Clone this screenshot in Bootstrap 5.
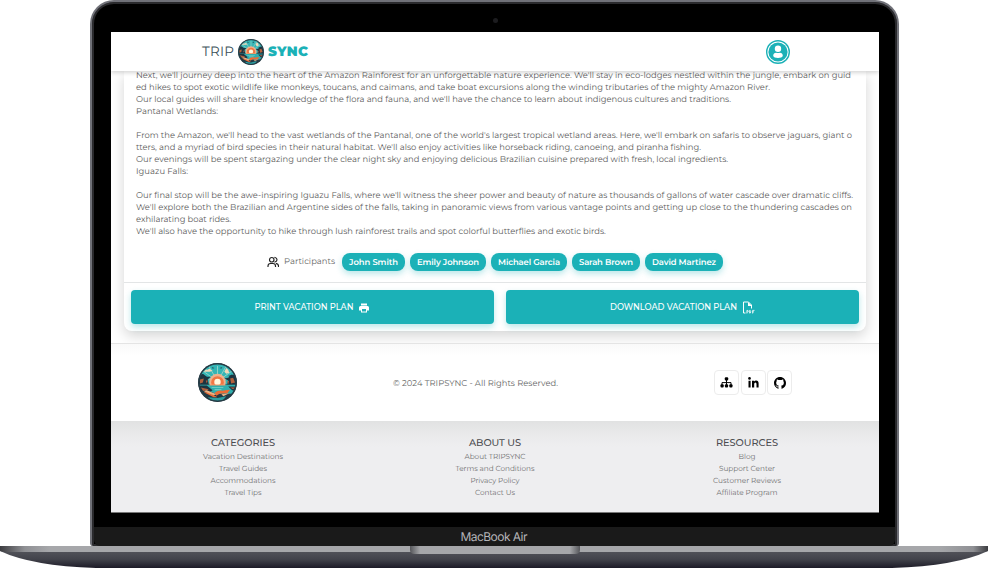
<!DOCTYPE html>
<html lang="en">
<head>
<meta charset="utf-8">
<meta name="viewport" content="width=device-width, initial-scale=1">
<title>TRIPSYNC</title>
<link href="https://cdn.jsdelivr.net/npm/bootstrap@5.3.0/dist/css/bootstrap.min.css" rel="stylesheet">
<style>
body{font-family:Montserrat,Inter,sans-serif;background:#fff;color:#666;width:988px;height:568px;overflow:hidden;text-rendering:geometricPrecision}
svg{display:block;flex:none}
.lid{width:809px;height:546px;margin-left:89.5px;border:2px solid #707178;border-bottom:0;border-radius:24px 24px 3px 3px;background:#000;box-shadow:inset 0 0 0 2px #2a2a2d;padding:0 17.5px 0 19.5px}
.cam-row{height:30px}
.cam{width:5px;height:5px;border-radius:50%;background:#1c1c1f;margin-top:8px}
.screen{width:768px;height:481px;background:#fff;border-bottom:1px solid #777}
.chin{height:19px;margin:14px -15.5px 0 -17.5px;background:#1a1a1a;border-radius:0 0 6px 6px;color:#b4b4b8;font-size:12px;line-height:19px;font-family:Inter,sans-serif}
.fit{display:inline-block;white-space:pre}
.topbar{height:39px;padding:0 89px 0 91px;background:#fff;box-shadow:0 2px 4px rgba(0,0,0,.16);z-index:2}
.word-a{font-size:13.5px;color:#3b5059;line-height:20px;padding-top:1px}
.word-b{font-size:13.5px;color:#1bb1b7;font-weight:900;line-height:20px;padding-top:1px}
.trip{height:260px;margin:0 13px;background:#fff;border-radius:0 0 8px 8px;box-shadow:0 5px 14px rgba(0,0,0,.17)}
.story{padding:0 12px;margin-top:-.6px;font-size:8.4px;line-height:12px;height:183px;color:#5c5c5c}
.story .fit{display:block;width:max-content}
.people{height:28.600px;font-size:8.4px}
.who{padding-top:1px;margin:0 4px 0 5px}
.chips{gap:5px;margin-left:3px}
.chip{background:#1bb1b7;color:#fff;height:17.5px;line-height:20px;padding:0 7px;border-radius:8px;font-weight:600;box-shadow:0 3px 6px rgba(27,177,183,.3);white-space:nowrap}
.actions{height:49px;padding:7px 7px 8px;border-top:1px solid #e3e5e6;gap:12px;border-radius:0 0 8px 8px}
.act{height:34px;border-radius:4px;background:#1bb1b7;color:#fff;font-size:8.4px;font-weight:500;box-shadow:0 3px 6px rgba(27,177,183,.3);border:0;padding:1px 0 0;gap:5px}
.w-print{width:363px}.w-load{width:353px}
.foot{height:78px;margin-top:12px;border-top:1px solid #e4e4e4;background:linear-gradient(#f9f9f9,#fff 12px);padding:0 87px;font-size:8.4px;z-index:1}
.rights{padding-top:3px}
.socials{gap:1.5px}
.sq{width:25px;height:25px;border:1px solid #ececec;border-radius:4px;background:#fff;color:#000}
.sitemap{background:linear-gradient(#e1e2e2,#eaeaeb 14px,#eeeef0 26px);padding:16px 6px 0;font-size:7.3px;line-height:12px;color:#707070}
.sitemap h2{font-size:9.8px;line-height:13px;margin:0 0 .5px;color:#4b4c50;font-weight:500}
.sitemap a{color:inherit;text-decoration:none;height:12px}
</style>
<script src="https://cdn.jsdelivr.net/npm/bootstrap@5.3.0/dist/js/bootstrap.bundle.min.js"></script>
</head>
<body>
<svg width="0" height="0" class="position-absolute">
<defs>
<clipPath id="disc"><circle cx="20" cy="20" r="19"/></clipPath>
<symbol id="emblem" viewBox="0 0 40 40">
<circle cx="20" cy="20" r="20" fill="#263b45"/>
<g clip-path="url(#disc)">
<path fill="#35b5b5" d="M0 0h40v22H0z"/>
<path stroke="#a9d8cb" stroke-width=".8" d="M20 19 5 8M20 19 11 3M20 19V3M20 19 29 3M20 19 35 8M20 19 3 14M20 19 37 14"/>
<path fill="#f3d8b9" d="M6 9q2-3 4-2 2-2 3 0l2 1-3 1H7zM27 9l2-4 2 2 1 3-3 1z"/><path fill="#23525c" d="M14 4l3 1-2 1zM22 5l3-1-1 2zM31 13l4-1-2 3zM5 13l4 1-3 1z"/>
<circle cx="20" cy="19.500" r="8.500" fill="#eeb18d"/><circle cx="20" cy="20" r="6.500" fill="#f17743"/><circle cx="20" cy="19.500" r="3.300" fill="#fff8df"/>
<path fill="#2fafae" d="M0 22.500h40v9H0z"/><path fill="#f39a68" d="M12 22h16v1H12z"/><path fill="#7ed3cb" d="M14 24.500h12v1H14zM17 27h7v1h-7z"/>
<path fill="#1d3440" d="M0 13l5-2 4 3 4 0-3 3 1 5H0zM40 12l-6 0-3 3-4 1 4 2-1 4h10zM0 23h9l6 5-5 3-10-1zM40 24h-9l4 4 5 1z"/>
<path fill="#b4613d" d="M2 17l4-1-1 4-3 1zM8 18l2 0-1 3zM33 16l3-1 2 5-4 1zM30 19l2-1-1 4zM3 25l8 2-5 3zM33 25l5 0-2 2z"/>
<path fill="#1f3944" d="M0 30q10-4 20 3t20-2v9H0z"/>
<path fill="#ec6b35" d="M17 30.500q4-3 8-2 5-1 8-1l-3 3.500-8 .5-3 2zM6 30l5 0 9 5-4 0z"/><path fill="#e9b184" d="M9 28l10 4-3 1-10-4zM24 32l8-1-6 3z"/>
<path fill="#2c9d9f" d="M10 35l10 1 9-2-4 5H15z"/>
</g>
<circle cx="20" cy="20" r="19.100" fill="none" stroke="#263b45" stroke-width="1.300"/>
</symbol>
</defs>
</svg>

<div class="lid d-flex flex-column">
  <div class="cam-row d-flex justify-content-center pt-2"><span class="cam"></span></div>
  <div class="screen d-flex flex-column overflow-hidden flex-shrink-0">
    <header class="topbar d-flex align-items-center justify-content-between position-relative flex-shrink-0">
      <div class="d-flex align-items-center gap-1">
        <span class="word-a fit" data-w="32">TRIP</span>
        <svg width="26" height="26"><use href="#emblem"/></svg>
        <span class="word-b fit" data-w="40">SYNC</span>
      </div>
      <svg width="24" height="24" viewBox="0 0 24 24"><circle cx="12" cy="12" r="11.300" fill="#fff" stroke="#1bb1b7" stroke-width="1.400"/><circle cx="12" cy="12" r="9.600" fill="#1bb1b7"/><circle cx="12" cy="8.800" r="3.200" fill="#fff"/><path fill="#fff" d="M7.200 15.700c0-1.800 1.200-2.900 3-2.900.7.400 2.900.4 3.600 0 1.800 0 3 1.100 3 2.900-.3 3-9.300 3-9.600 0z"/></svg>
    </header>

    <main class="trip flex-shrink-0">
      <div class="story">
        <span class="fit" data-w="715">Next, we'll journey deep into the heart of the Amazon Rainforest for an unforgettable nature experience. We'll stay in eco-lodges nestled within the jungle, embark on guid</span>
        <span class="fit" data-w="634">ed hikes to spot exotic wildlife like monkeys, toucans, and caimans, and take boat excursions along the winding tributaries of the mighty Amazon River.</span>
        <span class="fit" data-w="595">Our local guides will share their knowledge of the flora and fauna, and we'll have the chance to learn about indigenous cultures and traditions.</span>
        <span class="fit" data-w="82">Pantanal Wetlands:</span>
        <br>
        <span class="fit" data-w="716">From the Amazon, we'll head to the vast wetlands of the Pantanal, one of the world's largest tropical wetland areas. Here, we'll embark on safaris to observe jaguars, giant o</span>
        <span class="fit" data-w="565">tters, and a myriad of bird species in their natural habitat. We'll also enjoy activities like horseback riding, canoeing, and piranha fishing.</span>
        <span class="fit" data-w="592">Our evenings will be spent stargazing under the clear night sky and enjoying delicious Brazilian cuisine prepared with fresh, local ingredients.</span>
        <span class="fit" data-w="52">Iguazu Falls:</span>
        <br>
        <span class="fit" data-w="717">Our final stop will be the awe-inspiring Iguazu Falls, where we'll witness the sheer power and beauty of nature as thousands of gallons of water cascade over dramatic cliffs.</span>
        <span class="fit" data-w="716">We'll explore both the Brazilian and Argentine sides of the falls, taking in panoramic views from various vantage points and getting up close to the thundering cascades on</span>
        <span class="fit" data-w="95">exhilarating boat rides.</span>
        <span class="fit" data-w="470">We'll also have the opportunity to hike through lush rainforest trails and spot colorful butterflies and exotic birds.</span>
      </div>
      <div class="people d-flex justify-content-center align-items-start">
        <div class="d-flex align-items-center">
          <svg width="12" height="12" viewBox="0 0 24 24" fill="none" stroke="#222" stroke-width="2.300" stroke-linecap="square"><circle cx="9.500" cy="7.500" r="4.500"/><path d="M2 21v-1q0-5 5-5h5q5 0 5 5v1M16 3q4 1 4 4.500T16 12M19 15q4 1 4 5v1"/></svg>
          <span class="fit who" data-w="51">Participants</span>
          <div class="chips d-flex">
            <span class="chip"><span class="fit" data-w="49">John Smith</span></span>
            <span class="chip"><span class="fit" data-w="62">Emily Johnson</span></span>
            <span class="chip"><span class="fit" data-w="62">Michael Garcia</span></span>
            <span class="chip"><span class="fit" data-w="54">Sarah Brown</span></span>
            <span class="chip"><span class="fit" data-w="64">David Martinez</span></span>
          </div>
        </div>
      </div>
      <div class="actions d-flex">
        <button class="btn act w-print d-flex align-items-center justify-content-center"><span class="fit" data-w="99">PRINT VACATION PLAN</span>
          <svg width="12" height="12" viewBox="0 0 24 24" fill="#fff"><path d="M6 3h12v4H6zM5 8h14q3 0 3 3v6h-4v4H6v-4H2v-6q0-3 3-3zm3 6v5h8v-5z"/></svg></button>
        <button class="btn act w-load d-flex align-items-center justify-content-center"><span class="fit" data-w="127">DOWNLOAD VACATION PLAN</span>
          <svg width="13" height="13" viewBox="0 0 13 13" fill="none" stroke="#fff"><path d="M3.500 12H1.500V1H6.500L9.500 4V7.500"/><path fill="#fff" stroke="none" d="M6 1l4 4H6z"/><path stroke-width=".800" d="M4.900 12.500V9.400h1q1 .8 0 1.600h-1M7.600 9.400v2.700h.6q1.100-1.300 0-2.700zM10.600 12.500V9.400h1.900M10.600 10.900H12"/></svg></button>
      </div>
    </main>

    <footer class="foot d-flex align-items-center justify-content-between flex-shrink-0 position-relative">
      <svg width="39" height="39"><use href="#emblem"/></svg>
      <span class="fit rights" data-w="165">© 2024 TRIPSYNC - All Rights Reserved.</span>
      <div class="socials d-flex">
        <a class="sq d-flex align-items-center justify-content-center"><svg width="13" height="11" viewBox="0 0 13 11"><path fill="none" stroke="#000" d="M6.500 3v6M2 8V5.600h9V8"/><rect x="4.800" y=".200" width="3.400" height="3.400" rx="1"/><rect x=".500" y="7.200" width="3.200" height="3.200" rx="1"/><rect x="4.900" y="7.200" width="3.200" height="3.200" rx="1"/><rect x="9.300" y="7.200" width="3.200" height="3.200" rx="1"/></svg></a>
        <a class="sq d-flex align-items-center justify-content-center"><svg width="11" height="11" viewBox="0 0 11 11"><circle cx="1.500" cy="1.400" r="1.300"/><path d="M.500 3.700h2.100v6.800H.500zM4 3.700h2v.9q.7-1.100 2.100-1.100 2.500 0 2.500 2.900v4.100H8.500V6.900q0-1.500-1.100-1.500-1.200 0-1.200 1.500v3.600H4z"/></svg></a>
        <a class="sq d-flex align-items-center justify-content-center"><svg width="12" height="12" viewBox="0 0 16 16"><path d="M8 0C3.580 0 0 3.580 0 8c0 3.540 2.290 6.530 5.470 7.590.4.070.55-.17.55-.38 0-.19-.01-.82-.01-1.490-2.010.37-2.530-.49-2.690-.94-.09-.23-.48-.94-.82-1.130-.28-.15-.68-.52-.01-.53.63-.01 1.080.58 1.230.82.720 1.210 1.870.87 2.330.66.070-.52.280-.87.510-1.070-1.780-.2-3.640-.89-3.640-3.950 0-.87.310-1.590.82-2.150-.08-.2-.36-1.020.08-2.120 0 0 .67-.21 2.200.82a7.600 7.600 0 0 1 4 0c1.530-1.040 2.200-.82 2.200-.82.440 1.100.16 1.920.08 2.120.51.560.82 1.270.82 2.150 0 3.070-1.870 3.750-3.650 3.950.29.250.54.730.54 1.480 0 1.070-.01 1.930-.01 2.200 0 .21.150.46.550.38A8 8 0 0 0 16 8c0-4.420-3.580-8-8-8z"/></svg></a>
      </div>
    </footer>

    <nav class="sitemap d-flex text-center flex-grow-1">
      <div class="d-flex flex-column align-items-center flex-fill w-100">
        <h2 class="fit" data-w="64">CATEGORIES</h2>
        <a class="fit" data-w="80">Vacation Destinations</a><a class="fit" data-w="48">Travel Guides</a><a class="fit" data-w="65">Accommodations</a><a class="fit" data-w="37">Travel Tips</a>
      </div>
      <div class="d-flex flex-column align-items-center flex-fill w-100">
        <h2 class="fit" data-w="52">ABOUT US</h2>
        <a class="fit" data-w="61">About TRIPSYNC</a><a class="fit" data-w="79">Terms and Conditions</a><a class="fit" data-w="49">Privacy Policy</a><a class="fit" data-w="40">Contact Us</a>
      </div>
      <div class="d-flex flex-column align-items-center flex-fill w-100">
        <h2 class="fit" data-w="62">RESOURCES</h2>
        <a class="fit" data-w="17">Blog</a><a class="fit" data-w="56">Support Center</a><a class="fit" data-w="68">Customer Reviews</a><a class="fit" data-w="61">Affiliate Program</a>
      </div>
    </nav>
  </div>
  <div class="chin text-center flex-shrink-0"><span class="fit" data-w="67">MacBook Air</span></div>
</div>
<svg width="988" height="22" viewBox="0 0 988 22">
<defs>
<linearGradient id="under" x2="0" y2="1"><stop offset="0" stop-color="#5c5d63"/><stop offset=".6" stop-color="#42434b"/><stop offset="1" stop-color="#1c1b27"/></linearGradient>
<linearGradient id="edge"><stop offset="0" stop-color="#3c3c40"/><stop offset=".025" stop-color="#8f9094"/><stop offset=".05" stop-color="#a6a7aa"/><stop offset=".95" stop-color="#a6a7aa"/><stop offset=".985" stop-color="#8f9094"/><stop offset="1" stop-color="#3c3c40"/></linearGradient>
<linearGradient id="lip"><stop offset="0" stop-color="#55565a"/><stop offset=".06" stop-color="#a6a7aa"/><stop offset=".94" stop-color="#a6a7aa"/><stop offset="1" stop-color="#55565a"/></linearGradient>
</defs>
<path fill="url(#under)" d="M0 5Q32 20 96 22H892Q956 20 988 5V0H0z"/>
<path fill="url(#edge)" d="M0 0H988V5L984 6H4L0 5z"/>
<path fill="url(#lip)" d="M410 0H580V4Q580 8 575 8H415Q410 8 410 4z"/>
</svg>
<script>
// Spread the letters of each label so that it fills its intended measure.
document.querySelectorAll('.fit').forEach(function (el) {
  var want = +el.dataset.w, n = el.textContent.length;
  var gap = (want - el.getBoundingClientRect().width) / (n - 1);
  el.style.letterSpacing = gap + 'px';
  el.style.marginRight = (parseFloat(getComputedStyle(el).marginRight) - gap) + 'px';
});
</script>
</body>
</html>
